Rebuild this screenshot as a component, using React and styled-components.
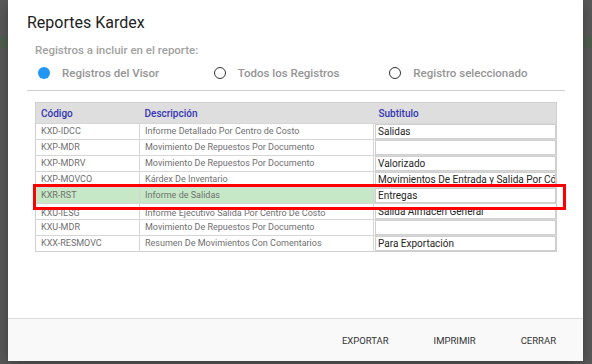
import styled, { createGlobalStyle } from "styled-components";

const GlobalStyle = createGlobalStyle`
    *{
        box-sizing: border-box;
    }
    body{
        margin: 0;
        font-family: Roboto, "Liberation Sans", sans-serif;
        background-color: #595959;
    }
`

const rows = [
    { code: "KXD-IDCC", desc: "Informe Detallado Por Centro de Costo", sub: "Salidas" },
    { code: "KXP-MDR", desc: "Movimiento De Repuestos Por Documento", sub: "" },
    { code: "KXP-MDRV", desc: "Movimiento De Repuestos Por Documento", sub: "Valorizado" },
    { code: "KXP-MOVCO", desc: "Kárdex De Inventario", sub: "Movimientos De Entrada y Salida Por Código" },
    { code: "KXR-RST", desc: "Informe de Salidas", sub: "Entregas", selected: true },
    { code: "KXU-IESG", desc: "Informe Ejecutivo Salida Por Centro De Costo", sub: "Salida Almacén General", hidden: true },
    { code: "KXU-MDR", desc: "Movimiento De Repuestos Por Documento", sub: "" },
    { code: "KXX-RESMOVC", desc: "Resumen De Movimientos Con Comentarios", sub: "Para Exportación" },
]

const options = ["Registros del Visor", "Todos los Registros", "Registro seleccionado"]

export default function App(){
    return(
        <>
            <GlobalStyle />
            <Backdrop>
                <PageBand />
                <Modal>
                    <Title>Reportes Kardex</Title>
                    <Content>
                        <Caption>Registros a incluir en el reporte:</Caption>
                        <RadioRow>
                            {options.map((o, i) => (
                                <RadioItem key={o}>
                                    <RadioDot $checked={i === 0} />
                                    <span>{o}</span>
                                </RadioItem>
                            ))}
                        </RadioRow>
                        <Divider />
                        <TableWrap>
                            <Table>
                                <thead>
                                    <tr>
                                        <Th style={{width: 104}}>Código</Th>
                                        <Th style={{width: 234}}>Descripción</Th>
                                        <Th>Subtitulo</Th>
                                    </tr>
                                </thead>
                                <tbody>
                                    {rows.map(r => (
                                        <Row key={r.code} $selected={r.selected}>
                                            <Td><CellText $cut={r.hidden}>{r.code}</CellText></Td>
                                            <Td><CellText $cut={r.hidden}>{r.desc}</CellText></Td>
                                            <SubTd><SubInput $cut={r.hidden}>{r.sub}</SubInput></SubTd>
                                        </Row>
                                    ))}
                                </tbody>
                            </Table>
                            <Highlight />
                        </TableWrap>
                    </Content>
                    <Footer>
                        <FlatButton>Exportar</FlatButton>
                        <FlatButton>Imprimir</FlatButton>
                        <FlatButton>Cerrar</FlatButton>
                    </Footer>
                </Modal>
            </Backdrop>
        </>
    )
}

const Backdrop = styled.div`
    position: relative;
    width: 592px;
    height: 364px;
    overflow: hidden;
    background-color: #595959;
    padding-left: 8px;
`

const PageBand = styled.div`
    position: absolute;
    left: 0;
    top: 36px;
    width: 100%;
    height: 12px;
    background-color: #4f5e4f;
`

const Modal = styled.div`
    position: relative;
    width: 575px;
    height: 361px;
    background-color: #ffffff;
    display: flex;
    flex-direction: column;
    box-shadow: 0 4px 12px rgba(0,0,0,0.3);
`

const Title = styled.h1`
    margin: 0;
    padding: 13px 0 0 19px;
    font-size: 16px;
    font-weight: 400;
    color: #222;
    height: 40px;
`

const Content = styled.div`
    flex: 1;
    padding: 0 18px 0 19px;
`

const Caption = styled.p`
    margin: 3px 0 0 8px;
    font-size: 11.5px;
    font-weight: 500;
    color: #a2a2a2;
`

const RadioRow = styled.div`
    display: flex;
    margin: 9px 0 0 11px;
`

const RadioItem = styled.label`
    display: flex;
    align-items: center;
    gap: 12px;
    width: 178px;
    font-size: 11.5px;
    font-weight: 500;
    color: #959595;
`

const RadioDot = styled.span`
    width: 12px;
    height: 12px;
    border-radius: 50%;
    background-color: ${p => p.$checked ? "#2196f3" : "transparent"};
    border: ${p => p.$checked ? "none" : "1.5px solid #333"};
`

const Divider = styled.div`
    margin-top: 10px;
    height: 1px;
    background-color: #cfcfcf;
`

const TableWrap = styled.div`
    position: relative;
    margin: 11px 0 0 8px;
    width: 522px;
`

const Table = styled.table`
    width: 100%;
    border-collapse: collapse;
    table-layout: fixed;
    border: 1px solid #cfcfcf;
`

const Th = styled.th`
    background-color: #dedede;
    color: #3535b5;
    font-size: 10px;
    font-weight: 500;
    text-align: left;
    padding: 0 0 0 5px;
    height: 21px;
`

const Row = styled.tr`
    background-color: ${p => p.$selected ? "#c6e8c6" : "#ffffff"};
    border-top: 1px solid #d6d6d6;
`

const Td = styled.td`
    border-right: 1px solid #d6d6d6;
    padding: 0 0 0 5px;
    height: 16px;
    font-size: 9px;
    color: #707070;
    white-space: nowrap;
    overflow: hidden;
`

const CellText = styled.div`
    overflow: hidden;
    height: ${p => p.$cut ? "9px" : "15px"};
    line-height: ${p => p.$cut ? "6px" : "15px"};
    margin-top: ${p => p.$cut ? "6px" : "0"};
`

const SubTd = styled.td`
    padding: 0 0 0 1px;
    height: 16px;
`

const SubInput = styled.div`
    height: 15px;
    border: 1px solid #cfcfcf;
    background-color: #fff;
    font-size: 10px;
    line-height: 13px;
    color: #262626;
    padding-left: 2px;
    white-space: nowrap;
    overflow: hidden;
    ${p => p.$cut && "height: 9px; margin-top: 6px; line-height: 4px; border-top: none;"}
`

const Highlight = styled.div`
    position: absolute;
    left: -2px;
    top: 82px;
    width: 533px;
    height: 26px;
    border: 3px solid #ff0000;
    pointer-events: none;
`

const Footer = styled.div`
    height: 43px;
    background-color: #f9f9f9;
    border-top: 1px solid #dcdcdc;
    display: flex;
    justify-content: flex-end;
    align-items: center;
    padding-right: 27px;
`

const FlatButton = styled.button`
    background: none;
    border: none;
    font-family: Roboto, "Liberation Sans", sans-serif;
    text-transform: uppercase;
    font-size: 9.5px;
    color: #333;
    padding: 0 22.5px;
    height: 30px;
    &:last-child{
        padding-right: 0;
    }
`
